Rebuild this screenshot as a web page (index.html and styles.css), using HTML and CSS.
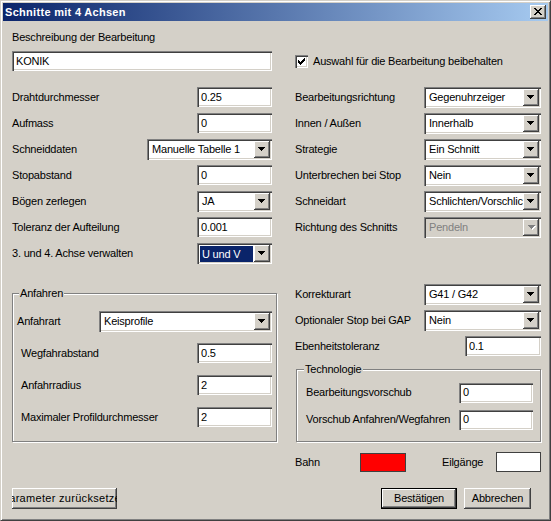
FILE: index.html
```html
<!DOCTYPE html>
<html lang="de">
<head>
<meta charset="utf-8">
<title>Schnitte mit 4 Achsen</title>
<link rel="stylesheet" href="styles.css">
</head>
<body>
<div class="window">
  <div class="titlebar">
    <span class="title">Schnitte mit 4 Achsen</span>
    <span class="close"><svg width="8" height="7" viewBox="0 0 8 7" shape-rendering="crispEdges"><path d="M0 0h2v1H0z M6 0h2v1H6z M1 1h2v1H1z M5 1h2v1H5z M2 2h4v1H2z M3 3h2v1H3z M2 4h4v1H2z M1 5h2v1H1z M5 5h2v1H5z M0 6h2v1H0z M6 6h2v1H6z" fill="#000"/></svg></span>
  </div>
  <div class="content">
    <div class="desc-label">Beschreibung der Bearbeitung</div>
    <div class="grid2 toprow">
      <div class="edit w260">KONIK</div>
      <div class="check">
        <span class="checkbox"><svg width="7" height="7" viewBox="0 0 7 7" shape-rendering="crispEdges"><path d="M0 2h1v3H0z M1 3h1v3H1z M2 4h1v3H2z M3 3h1v3H3z M4 2h1v3H4z M5 1h1v3H5z M6 0h1v3H6z" fill="#000"/></svg></span>
        <span>Auswahl für die Bearbeitung beibehalten</span>
      </div>
    </div>

    <div class="grid2 main">
      <div class="rows left">
        <div class="row"><span>Drahtdurchmesser</span><div class="edit w75">0.25</div></div>
        <div class="row"><span>Aufmass</span><div class="edit w75">0</div></div>
        <div class="row"><span>Schneiddaten</span><div class="combo w125"><span class="val">Manuelle Tabelle 1</span><span class="dd"><svg width="7" height="4" viewBox="0 0 7 4" shape-rendering="crispEdges"><path d="M0 0h7v1H0z M1 1h5v1H1z M2 2h3v1H2z M3 3h1v1H3z" fill="#000"/></svg></span></div></div>
        <div class="row"><span>Stopabstand</span><div class="edit w75">0</div></div>
        <div class="row"><span>Bögen zerlegen</span><div class="combo w75"><span class="val">JA</span><span class="dd"><svg width="7" height="4" viewBox="0 0 7 4" shape-rendering="crispEdges"><path d="M0 0h7v1H0z M1 1h5v1H1z M2 2h3v1H2z M3 3h1v1H3z" fill="#000"/></svg></span></div></div>
        <div class="row"><span>Toleranz der Aufteilung</span><div class="edit w75">0.001</div></div>
        <div class="row"><span>3. und 4. Achse verwalten</span><div class="combo w75"><span class="val selected">U und V</span><span class="dd"><svg width="7" height="4" viewBox="0 0 7 4" shape-rendering="crispEdges"><path d="M0 0h7v1H0z M1 1h5v1H1z M2 2h3v1H2z M3 3h1v1H3z" fill="#000"/></svg></span></div></div>
      </div>
      <div class="rows right">
        <div class="row"><span>Bearbeitungsrichtung</span><div class="combo w117"><span class="val">Gegenuhrzeiger</span><span class="dd"><svg width="7" height="4" viewBox="0 0 7 4" shape-rendering="crispEdges"><path d="M0 0h7v1H0z M1 1h5v1H1z M2 2h3v1H2z M3 3h1v1H3z" fill="#000"/></svg></span></div></div>
        <div class="row"><span>Innen / Außen</span><div class="combo w117"><span class="val">Innerhalb</span><span class="dd"><svg width="7" height="4" viewBox="0 0 7 4" shape-rendering="crispEdges"><path d="M0 0h7v1H0z M1 1h5v1H1z M2 2h3v1H2z M3 3h1v1H3z" fill="#000"/></svg></span></div></div>
        <div class="row"><span>Strategie</span><div class="combo w117"><span class="val">Ein Schnitt</span><span class="dd"><svg width="7" height="4" viewBox="0 0 7 4" shape-rendering="crispEdges"><path d="M0 0h7v1H0z M1 1h5v1H1z M2 2h3v1H2z M3 3h1v1H3z" fill="#000"/></svg></span></div></div>
        <div class="row"><span>Unterbrechen bei Stop</span><div class="combo w117"><span class="val">Nein</span><span class="dd"><svg width="7" height="4" viewBox="0 0 7 4" shape-rendering="crispEdges"><path d="M0 0h7v1H0z M1 1h5v1H1z M2 2h3v1H2z M3 3h1v1H3z" fill="#000"/></svg></span></div></div>
        <div class="row"><span>Schneidart</span><div class="combo w117"><span class="val">Schlichten/Vorschlichten</span><span class="dd"><svg width="7" height="4" viewBox="0 0 7 4" shape-rendering="crispEdges"><path d="M0 0h7v1H0z M1 1h5v1H1z M2 2h3v1H2z M3 3h1v1H3z" fill="#000"/></svg></span></div></div>
        <div class="row"><span>Richtung des Schnitts</span><div class="combo w117 disabled"><span class="val">Pendeln</span><span class="dd"><svg width="8" height="5" viewBox="0 0 8 5" shape-rendering="crispEdges"><path d="M1 1h7v1H1z M2 2h5v1H2z M3 3h3v1H3z M4 4h1v1H4z" fill="#fff"/><path d="M0 0h7v1H0z M1 1h5v1H1z M2 2h3v1H2z M3 3h1v1H3z" fill="#808080"/></svg></span></div></div>
      </div>
    </div>

    <div class="grid2 lower">
      <fieldset class="group anfahren">
        <legend>Anfahren</legend>
        <div class="grow"><span>Anfahrart</span><div class="combo w173"><span class="val">Keisprofile</span><span class="dd"><svg width="7" height="4" viewBox="0 0 7 4" shape-rendering="crispEdges"><path d="M0 0h7v1H0z M1 1h5v1H1z M2 2h3v1H2z M3 3h1v1H3z" fill="#000"/></svg></span></div></div>
        <div class="grow"><span class="ind">Wegfahrabstand</span><div class="edit w75">0.5</div></div>
        <div class="grow"><span class="ind">Anfahrradius</span><div class="edit w75">2</div></div>
        <div class="grow"><span class="ind">Maximaler Profildurchmesser</span><div class="edit w75">2</div></div>
      </fieldset>
      <div class="rows right">
        <div class="row"><span>Korrekturart</span><div class="combo w117"><span class="val">G41 / G42</span><span class="dd"><svg width="7" height="4" viewBox="0 0 7 4" shape-rendering="crispEdges"><path d="M0 0h7v1H0z M1 1h5v1H1z M2 2h3v1H2z M3 3h1v1H3z" fill="#000"/></svg></span></div></div>
        <div class="row"><span>Optionaler Stop bei GAP</span><div class="combo w117"><span class="val">Nein</span><span class="dd"><svg width="7" height="4" viewBox="0 0 7 4" shape-rendering="crispEdges"><path d="M0 0h7v1H0z M1 1h5v1H1z M2 2h3v1H2z M3 3h1v1H3z" fill="#000"/></svg></span></div></div>
        <div class="row"><span>Ebenheitstoleranz</span><div class="edit w76">0.1</div></div>
        <fieldset class="group tech">
          <legend>Technologie</legend>
          <div class="trow"><span>Bearbeitungsvorschub</span><div class="edit w74">0</div></div>
          <div class="trow"><span>Vorschub Anfahren/Wegfahren</span><div class="edit w74">0</div></div>
        </fieldset>
      </div>
    </div>

    <div class="grid2 colors">
      <div></div>
      <div class="colorrow">
        <span class="bahn-label">Bahn</span>
        <span class="swatch red"></span>
        <span class="eil-label">Eilgänge</span>
        <span class="swatch white"></span>
      </div>
    </div>

    <div class="buttons">
      <div class="button btn-param"><span>Parameter zurücksetzen</span></div>
      <div class="button default btn-ok"><span>Bestätigen</span></div>
      <div class="button btn-cancel"><span>Abbrechen</span></div>
    </div>
  </div>
</div>
</body>
</html>
```
FILE: styles.css
```css
* { box-sizing: border-box; }
html, body { margin: 0; padding: 0; }
body {
  width: 551px;
  height: 521px;
  overflow: hidden;
  background: #D4D0C8;
  font-family: "Liberation Sans", Arial, sans-serif;
  font-size: 11px;
  letter-spacing: -0.2px;
  color: #000;
}
.window {
  width: 551px;
  height: 521px;
  background: #D4D0C8;
  border: 1px solid;
  border-color: #D4D0C8 #404040 #404040 #D4D0C8;
  box-shadow: inset 1px 1px #fff, inset -1px -1px #808080;
  padding: 2px;
  display: flex;
  flex-direction: column;
}
.titlebar {
  height: 18px;
  flex: none;
  background: linear-gradient(to right, #0A246A, #A6CAF0);
  display: flex;
  align-items: center;
  justify-content: space-between;
  padding: 0 2px 0 2px;
}
.title {
  color: #fff;
  font-weight: bold;
  letter-spacing: 0.3px;
  line-height: 18px;
}
.close {
  width: 16px;
  height: 14px;
  background: #D4D0C8;
  box-shadow: inset -1px -1px #404040, inset 1px 1px #fff, inset -2px -2px #808080;
  display: flex;
  align-items: center;
  justify-content: center;
  padding: 0 0 1px 0;
}
.close svg { display: block; }

.content {
  padding: 0 7px 0 9px;
  flex: 1;
}
.desc-label {
  margin-top: 10px;
  line-height: 13px;
}
.grid2 {
  display: grid;
  grid-template-columns: 265px 246px;
  column-gap: 18px;
}
.toprow {
  margin-top: 7px;
  height: 20px;
  align-items: center;
}
.check {
  display: flex;
  align-items: center;
  line-height: 13px;
}
.checkbox {
  width: 13px;
  height: 13px;
  margin-right: 5px;
  background: #fff;
  box-shadow: inset 1px 1px #808080, inset 2px 2px #404040, inset -1px -1px #fff, inset -2px -2px #D4D0C8;
  display: flex;
  padding: 3px;
}
.checkbox svg { display: block; }

.main { margin-top: 13px; }
.rows { display: flex; flex-direction: column; }
.rows.left { padding-right: 5px; }
.row {
  height: 26px;
  display: flex;
  align-items: center;
  justify-content: space-between;
  line-height: 13px;
  white-space: nowrap;
}

.edit {
  height: 20px;
  background: #fff;
  box-shadow: inset 1px 1px #808080, inset 2px 2px #404040, inset -1px -1px #fff, inset -2px -2px #D4D0C8;
  padding: 0 2px 0 4px;
  display: flex;
  align-items: center;
  line-height: 13px;
  white-space: nowrap;
  overflow: hidden;
  flex: none;
}
.combo {
  height: 21px;
  background: #fff;
  box-shadow: inset 1px 1px #808080, inset 2px 2px #404040, inset -1px -1px #fff, inset -2px -2px #D4D0C8;
  padding: 2px;
  display: flex;
  flex: none;
}
.combo .val {
  flex: 1;
  min-width: 0;
  padding-left: 3px;
  line-height: 17px;
  white-space: nowrap;
  overflow: hidden;
}
.combo .val.selected {
  background: #0A246A;
  color: #fff;
  margin: 1px 1px 0 1px;
  line-height: 16px;
  padding-left: 2px;
}
.combo .dd {
  width: 16px;
  height: 17px;
  flex: none;
  background: #D4D0C8;
  box-shadow: inset -1px -1px #404040, inset 1px 1px #fff, inset -2px -2px #808080;
  display: flex;
  align-items: center;
  justify-content: center;
  padding: 0 1px 1px 0;
}
.combo .dd svg { display: block; }
.combo.disabled { background: #D4D0C8; }
.combo.disabled .val { color: #808080; }
.combo.disabled .dd { padding: 1px 0 0 1px; }

.w260 { width: 260px; }
.w75 { width: 75px; }
.w76 { width: 76px; }
.w74 { width: 74px; }
.w117 { width: 117px; }
.w125 { width: 125px; }
.w173 { width: 173px; }

.lower { margin-top: 15px; align-items: start; }
.group {
  margin: 0;
  min-width: 0;
  border: 1px solid #808080;
  box-shadow: inset 1px 1px #fff, 1px 1px #fff;
}
.group legend {
  padding: 0 1px;
  line-height: 13px;
  background: #D4D0C8;
}
.anfahren {
  margin-top: 6px;
  width: 265px;
  padding: 5px 4px 8px 4px;
}
.anfahren legend { margin-left: 2px; }
.grow {
  height: 32px;
  display: flex;
  align-items: center;
  justify-content: space-between;
  line-height: 13px;
  white-space: nowrap;
}
.ind { padding-left: 4px; }

.tech {
  margin: 4px 0 0 1px;
  width: 245px;
  padding: 3px 7px 8px 9px;
}
.tech legend { margin-left: -2px; }
.trow {
  height: 27px;
  display: flex;
  align-items: center;
  justify-content: space-between;
  line-height: 13px;
  white-space: nowrap;
}

.colors { margin-top: 10px; height: 20px; }
.colorrow {
  display: flex;
  align-items: center;
  height: 20px;
  line-height: 13px;
}
.bahn-label { width: 65px; flex: none; }
.eil-label { width: 54px; margin-left: 36px; flex: none; }
.swatch { border: 1px solid #404040; flex: none; }
.red { width: 46px; height: 19px; background: #FF0000; }
.white { width: 45px; height: 20px; background: #fff; }

.buttons {
  margin-top: 16px;
  height: 21px;
  display: flex;
}
.button {
  height: 21px;
  background: #D4D0C8;
  box-shadow: inset -1px -1px #404040, inset 1px 1px #fff, inset -2px -2px #808080;
  display: flex;
  align-items: center;
  justify-content: center;
  overflow: hidden;
  white-space: nowrap;
  line-height: 13px;
  flex: none;
}
.button span { flex: none; }
.button.default {
  box-shadow: inset 0 0 0 1px #000, inset -2px -2px #404040, inset 2px 2px #fff, inset -3px -3px #808080;
}
.btn-param { width: 105px; }
.btn-param span { letter-spacing: 0.3px; }
.btn-ok { width: 76px; margin-left: auto; }
.btn-cancel { width: 67px; margin-left: 7px; margin-right: 10px; }
```
